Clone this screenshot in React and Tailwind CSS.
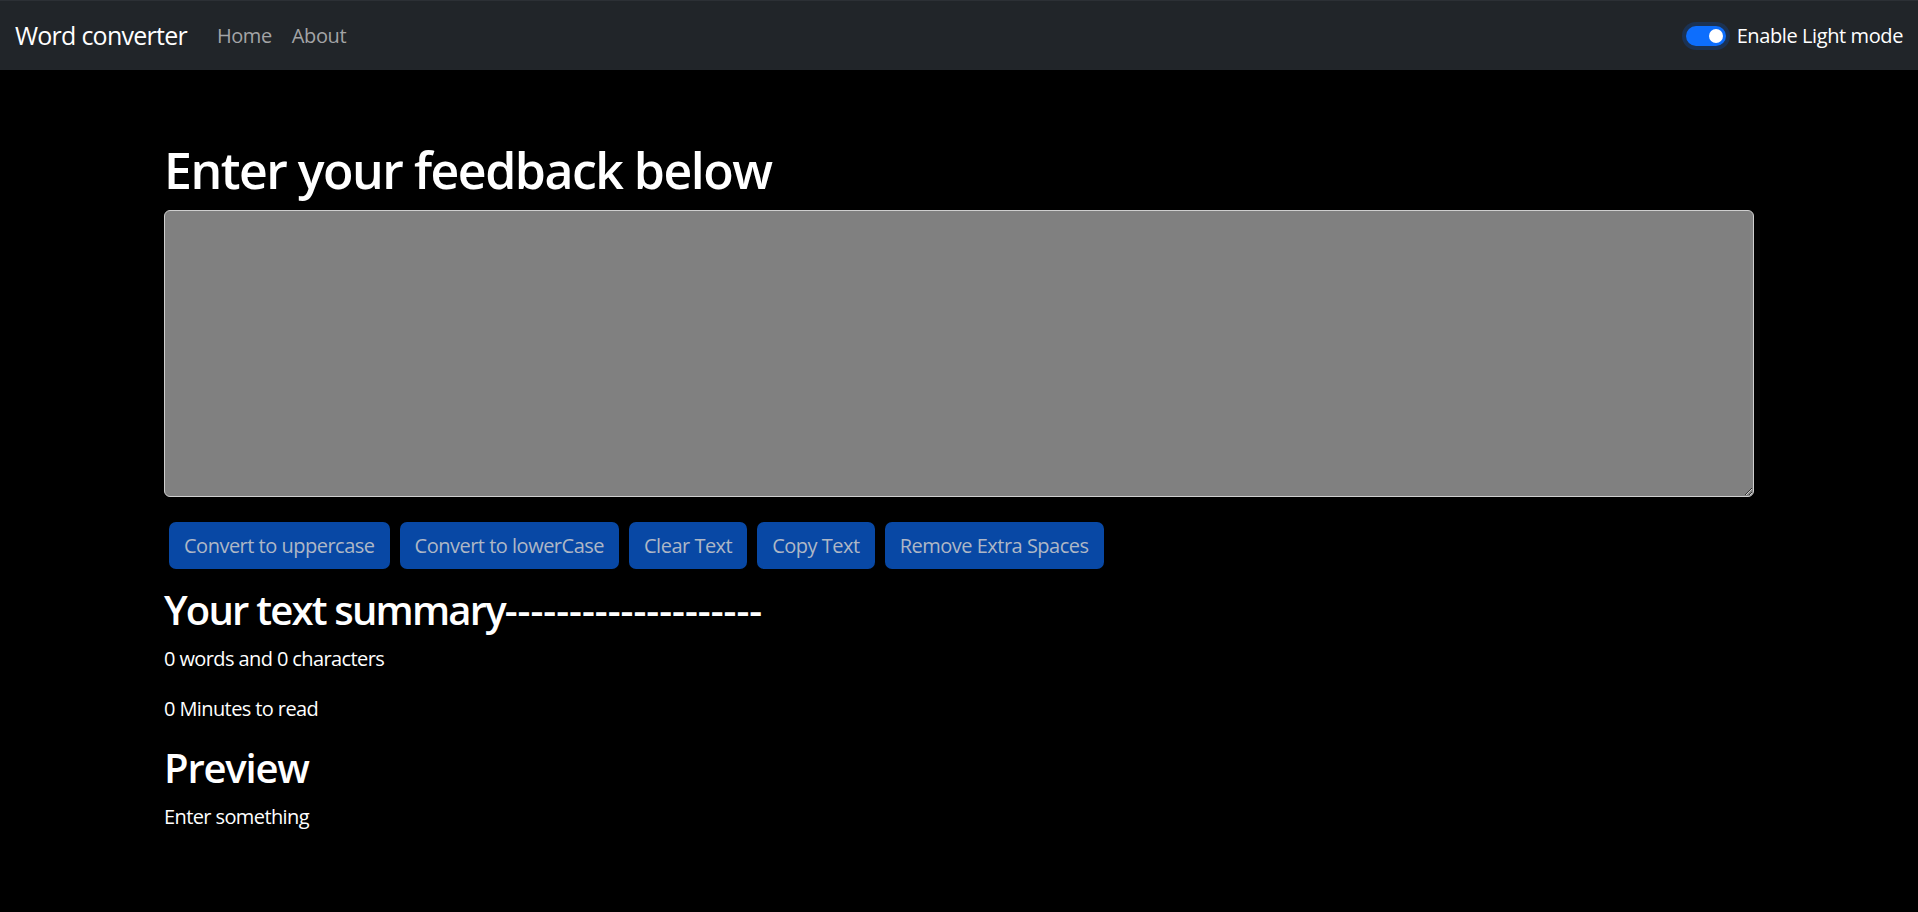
export default function App() {
  const buttons = [
    "Convert to uppercase",
    "Convert to lowerCase",
    "Clear Text",
    "Copy Text",
    "Remove Extra Spaces",
  ];
  return (
    <div className="min-h-[912px] bg-black text-white font-['Open_Sans',_'Noto_Sans',_sans-serif]">
      <nav className="h-[70px] bg-[#212529] border-t border-[#2c3035] flex items-center justify-between px-[15px]">
        <div className="flex items-center">
          <span className="text-[25px] text-white mr-[20px] leading-none tracking-[-0.03em]">Word converter</span>
          <a className="text-[20px] text-[#a3a4a6] px-[10px] tracking-[-0.02em]">Home</a>
          <a className="text-[20px] text-[#a3a4a6] px-[10px] tracking-[-0.02em]">About</a>
        </div>
        <div className="flex items-center">
          <span className="relative flex items-center w-[48px] h-[28px] rounded-full bg-[#1b3253] mr-[7px]">
            <span className="absolute left-[4px] top-[4px] w-[40px] h-[20px] rounded-full bg-[#0d6efd]"></span>
            <span className="absolute left-[27px] top-[7px] w-[14px] h-[14px] rounded-full bg-white"></span>
          </span>
          <span className="text-[20px] text-white tracking-[-0.02em]">Enable Light mode</span>
        </div>
      </nav>
      <main className="ml-[164px] w-[1590px]">
        <h1 className="mt-[70px] text-[50px] leading-[60px] font-semibold mb-[10px] tracking-[-0.03em]">Enter your feedback below</h1>
        <textarea
          className="block w-[1590px] h-[287px] bg-[#808080] border border-[#cfcfcf] rounded-[6px] mb-[20px] outline-none"
          defaultValue=""
        ></textarea>
        <div className="flex flex-wrap">
          {buttons.map((b) => (
            <button
              key={b}
              className="mx-[5px] my-[5px] h-[47px] px-[15px] rounded-[7px] bg-[#0848a5] text-[#aeb7c6] text-[20px] leading-[30px] tracking-[-0.025em]"
            >
              {b}
            </button>
          ))}
        </div>
        <h2 className="mt-[12px] text-[40px] leading-[48px] font-semibold mb-[10px] tracking-[-0.045em]">
          Your text summary<span className="tracking-normal">--------------------</span>
        </h2>
        <p className="text-[20px] leading-[30px] mb-[20px] tracking-[-0.03em]">0 words and 0 characters</p>
        <p className="text-[20px] leading-[30px] mb-[20px] tracking-[-0.03em]">0 Minutes to read</p>
        <h2 className="text-[40px] leading-[48px] font-semibold mb-[10px] tracking-[-0.03em]">Preview</h2>
        <p className="text-[20px] leading-[30px] tracking-[-0.03em]">Enter something</p>
      </main>
    </div>
  );
}
